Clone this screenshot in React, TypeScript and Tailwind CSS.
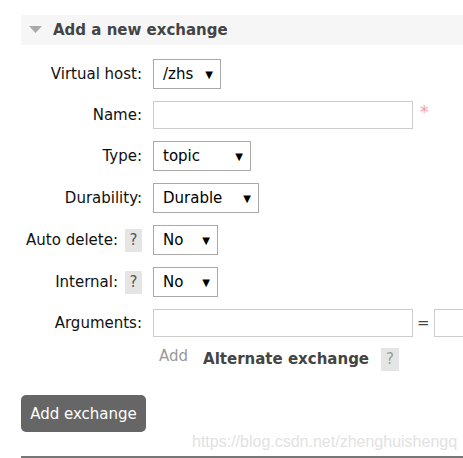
const Select = ({ value, width }: { value: string; width: string }) => (
  <div
    className={`flex h-[30px] shrink-0 items-center justify-between border border-[#a9a9a9] bg-white pl-[9px] pr-[7px] text-[15px] text-black ${width}`}
  >
    <span>{value}</span>
    <span className="text-[10px]">▼</span>
  </div>
);

const Help = () => (
  <span className="ml-[7px] flex h-[23px] w-[17px] items-center justify-center bg-[#e5e5e5] text-[15px] text-[#555]">
    ?
  </span>
);

const Row = ({ label, help, children }: { label: string; help?: boolean; children: React.ReactNode }) => (
  <div className="flex items-center">
    <div className="flex w-[121px] shrink-0 items-center justify-end">
      <span>{label}</span>
      {help && <Help />}
    </div>
    <div className="ml-[11px] flex shrink-0 items-center">{children}</div>
  </div>
);

const App = () => {
  return (
    <div className="h-[458px] w-[463px] overflow-hidden bg-white pl-[21px] pt-[15px] font-['DejaVu_Sans',sans-serif] text-[15px] text-[#111]">
      <div className="flex h-[30px] items-center bg-[#f6f6f6] pl-[8px]">
        <svg width="13" height="8" viewBox="0 0 13 8">
          <polygon points="0,0 13,0 6.5,7" fill="#aaa" />
        </svg>
        <span className="ml-[11px] text-[15px] font-bold text-[#444]">Add a new exchange</span>
      </div>

      <div className="mt-[14px] flex flex-col gap-[12px]">
        <Row label="Virtual host:">
          <Select value="/zhs" width="w-[68px]" />
        </Row>
        <Row label="Name:">
          <div className="h-[28px] w-[260px] shrink-0 border border-[#ccc]" />
          <span className="ml-[7px] -mt-[4px] text-[17px] text-[#f99]">*</span>
        </Row>
        <Row label="Type:">
          <Select value="topic" width="w-[98px]" />
        </Row>
        <Row label="Durability:">
          <Select value="Durable" width="w-[106px]" />
        </Row>
        <Row label="Auto delete:" help>
          <Select value="No" width="w-[65px]" />
        </Row>
        <Row label="Internal:" help>
          <Select value="No" width="w-[65px]" />
        </Row>
        <Row label="Arguments:">
          <div className="h-[28px] w-[260px] shrink-0 border border-[#ccc]" />
          <span className="mx-[4px] text-[#444]">=</span>
          <div className="h-[28px] w-[60px] shrink-0 border border-[#ccc]" />
        </Row>
      </div>

      <div className="ml-[138px] mt-[11px] flex items-center">
        <span className="-mt-[6px] text-[#999]">Add</span>
        <span className="ml-[15px] text-[15px] font-bold text-[#444]">Alternate exchange</span>
        <span className="ml-[12px] flex h-[23px] w-[18px] items-center justify-center bg-[#e5e5e5] text-[15px] text-[#999]">
          ?
        </span>
      </div>

      <button className="mt-[24px] flex h-[37px] w-[125px] items-center justify-center rounded-[5px] bg-[#666] pt-[2px] text-[15px] text-white">
        Add exchange
      </button>

      <div className="ml-[171px] mt-[1px] font-['Liberation_Sans',sans-serif] text-[16px] leading-[18px] text-[#e2e2e2]">
        https://blog.csdn.net/zhenghuishengq
      </div>
      <div className="mt-[5px] h-[2px] w-full bg-[#777]" />
    </div>
  );
};

export default App;
